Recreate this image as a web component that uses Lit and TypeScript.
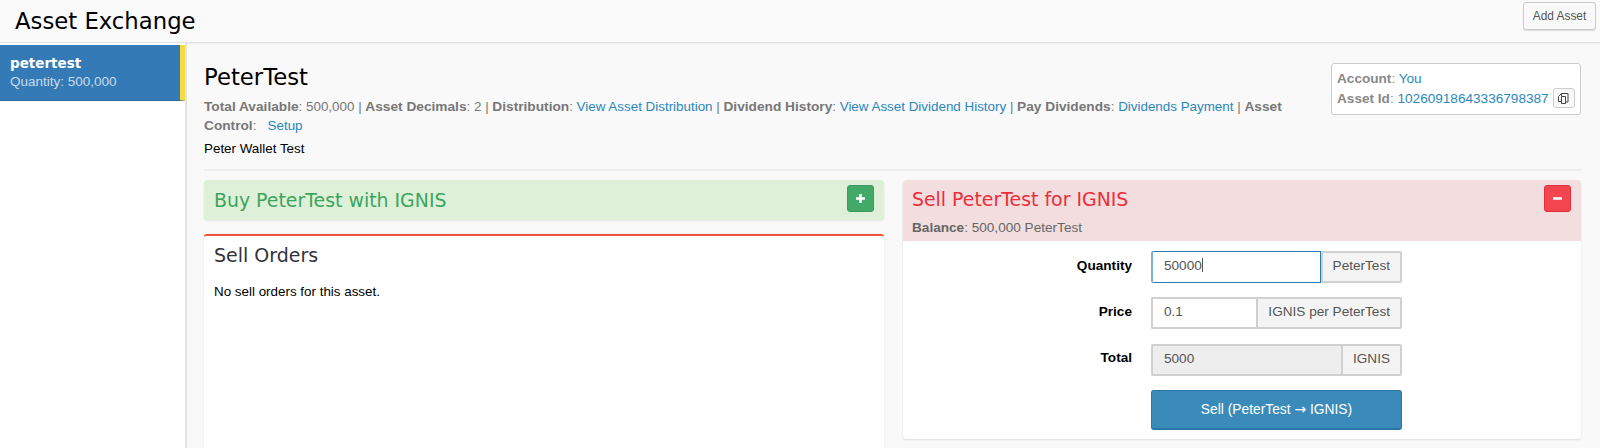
import { LitElement, html, css } from "lit";
import { customElement } from "lit/decorators.js";

@customElement("app-root")
export class AppRoot extends LitElement {
  static styles = css`
    :host { display: block; width: 1600px; height: 448px; overflow: hidden; background: #f9f9f9;
      font-family: "Liberation Sans", Arial, sans-serif; font-size: 13.6px; color: #000; box-sizing: border-box; }
    * { box-sizing: border-box; }
    a { color: #2a87bd; text-decoration: none; }
    .top { height: 43px; border-bottom: 1px solid #e2e2e2; display: flex; justify-content: space-between; align-items: flex-start; padding-left: 15px; background: #fafafa; box-shadow: 0 1px 1px #eee; }
    .top h1 { margin: 0; font: 400 22.75px/42px "DejaVu Sans", sans-serif; color: #000; }
    .add { margin: 2px 4px 0 0; width: 73px; height: 28px; border: 1px solid #ccc; border-radius: 3px; background: #f9f9f9; color: #555; font-size: 11.9px; line-height: 26px; text-align: center; box-shadow: 0 1px 1px #ddd; }
    .main { display: flex; height: 405px; }
    .side { width: 187px; flex: none; background: #fff; border-right: 2px solid #e4e4e4; padding-top: 2px; }
    .item { height: 56px; width: 185px; background: #337ab7; border-right: 5px solid #f5dc3c; border-bottom: 1px solid #2e6da4; padding: 9px 10px; color: #fff; }
    .item b { display: block; font: 700 13.5px/18px "DejaVu Sans", sans-serif; }
    .item span { display: block; font-size: 13.5px; line-height: 19px; color: #c9dcec; }
    .content { flex: 1; min-width: 0; padding: 0 19px 0 17px; }
    .head { display: flex; justify-content: space-between; align-items: flex-start; height: 128px; border-bottom: 2px solid #eee; }
    .info { width: 1100px; padding-top: 19px; }
    .info h2 { margin: 0 0 5px; font: 400 22.75px/30px "DejaVu Sans", sans-serif; color: #000; }
    .meta { font-size: 13.4px; line-height: 19px; color: #777; }
    .meta b { font-weight: 700; font-size: 13.7px; }
    .desc { margin-top: 4px; font-size: 13.4px; line-height: 19px; color: #000; }
    .box { margin-top: 20px; width: 250px; height: 52px; border: 1px solid #ccc; border-radius: 3px; background: #fff; padding: 5px 5px 0; font-size: 13.6px; line-height: 19px; color: #888; }
    .box b { font-weight: 700; }
    .box .r { display: flex; align-items: center; gap: 4px; white-space: nowrap; }
    .copy { flex: none; width: 22px; height: 20px; border: 1px solid #ccc; border-radius: 3px; background: #f9f9f9; display: inline-flex; align-items: center; justify-content: center; }
    .cols { display: grid; grid-template-columns: 680px 678px; gap: 19px; margin-top: 9px; align-items: start; }
    .bar { position: relative; height: 40px; background: #dff0d8; border-radius: 4px; padding: 0 10px; font: 400 18.9px/40px "DejaVu Sans", sans-serif; color: #3aa55d; box-shadow: 0 1px 2px #e4e4e4; }
    .tog { position: absolute; right: 10px; top: 5px; width: 27px; height: 27px; border-radius: 3px; display: flex; align-items: center; justify-content: center; }
    .tog.g { background: #42a968; border: 1px solid #3b9a5e; }
    .tog.r { background: #f2454f; border: 1px solid #e0303a; }
    .orders { margin-top: 14px; height: 220px; background: #fff; border-top: 2px solid #f0533c; border-radius: 3px 3px 0 0; padding: 0 10px; box-shadow: 0 0 2px #e2e2e2; }
    .orders h3 { margin: 0 0 8px; font: 400 19px/38px "DejaVu Sans", sans-serif; color: #33333b; }
    .orders p { margin: 0; font-size: 13.4px; line-height: 20px; }
    .sell { background: #fff; border-radius: 4px; height: 259px; box-shadow: 0 1px 2px #ddd; }
    .sellhead { position: relative; height: 61px; background: #f2dede; border-radius: 4px 4px 0 0; padding: 0 9px; }
    .sellhead .t { font: 400 18.9px/39px "DejaVu Sans", sans-serif; color: #ee2d3a; }
    .sellhead .b { font-size: 13.6px; line-height: 18px; color: #666; }
    .form { display: grid; grid-template-columns: 229px 251px; column-gap: 19px; row-gap: 14.4px; padding-top: 10px; align-items: center; }
    .form label { text-align: right; font-weight: 700; font-size: 13.6px; position: relative; top: -2px; }
    .ig { display: flex; height: 32px; }
    .inp { flex: 1; min-width: 0; border: 2px solid #d0d0d0; border-right: 0; padding: 0 11px; font-size: 13.6px; line-height: 26px; color: #555; background: #fff; border-radius: 2px 0 0 2px; }
    .inp.focus { border: 1px solid #2a7cb5; border-left: 2px solid #7ab3d8; line-height: 28px; }
    .inp.dis { background: #eee; }
    .add2 { flex: none; border: 2px solid #d0d0d0; background: #f4f4f4; padding: 0 10px; font-size: 13.6px; line-height: 26px; color: #555; border-radius: 0 2px 2px 0; }
    .cur { display: inline-block; width: 1px; height: 14px; background: #555; vertical-align: -2px; }
    .btn { grid-column: 2; height: 40px; background: #3b8bba; border: 1px solid #2b76a6; border-bottom-width: 2px; border-radius: 3px; color: #fff; font-size: 13.8px; line-height: 36px; text-align: center; }
    .arrow { font-family: "DejaVu Sans", sans-serif; font-size: 14px; }
  `;

  render() {
    return html`
      <div class="top"><h1>Asset Exchange</h1><div class="add">Add Asset</div></div>
      <div class="main">
        <div class="side">
          <div class="item"><b>petertest</b><span>Quantity: 500,000</span></div>
        </div>
        <div class="content">
          <div class="head">
            <div class="info">
              <h2>PeterTest</h2>
              <div class="meta"><b>Total Available</b>: 500,000 | <b>Asset Decimals</b>: 2 | <b>Distribution</b>: <a>View Asset Distribution</a> | <b>Dividend History</b>: <a>View Asset Dividend History</a> | <b>Pay Dividends</b>: <a>Dividends Payment</a> | <b>Asset Control</b>: &nbsp; <a>Setup</a></div>
              <div class="desc">Peter Wallet Test</div>
            </div>
            <div class="box">
              <div><b>Account</b>: <a>You</a></div>
              <div class="r"><span><b>Asset Id</b>: <a>10260918643336798387</a></span>
                <span class="copy"><svg width="13" height="13" viewBox="0 0 13 13" fill="none" stroke="#444" stroke-width="1"><path d="M4.5 4V1.5H11v8.5H8.5M4.5 1.5 1.5 4.5v5H5"/><path d="M4.5 4.5H8.5V11.5H4.5z"/></svg></span></div>
            </div>
          </div>
          <div class="cols">
            <div>
              <div class="bar">Buy PeterTest with IGNIS
                <div class="tog g"><svg width="11" height="11" viewBox="0 0 11 11"><path d="M5.5 1v9M1 5.5h9" stroke="#fff" stroke-width="2.6"/></svg></div>
              </div>
              <div class="orders"><h3>Sell Orders</h3><p>No sell orders for this asset.</p></div>
            </div>
            <div class="sell">
              <div class="sellhead">
                <div class="t">Sell PeterTest for IGNIS</div>
                <div class="b"><b>Balance</b>: 500,000 PeterTest</div>
                <div class="tog r"><svg width="11" height="11" viewBox="0 0 11 11"><path d="M1 5.5h9" stroke="#fff" stroke-width="2.6"/></svg></div>
              </div>
              <div class="form">
                <label>Quantity</label>
                <div class="ig"><div class="inp focus">50000<span class="cur"></span></div><div class="add2">PeterTest</div></div>
                <label>Price</label>
                <div class="ig"><div class="inp">0.1</div><div class="add2">IGNIS per PeterTest</div></div>
                <label>Total</label>
                <div class="ig"><div class="inp dis">5000</div><div class="add2">IGNIS</div></div>
                <div class="btn">Sell (PeterTest <span class="arrow">→</span> IGNIS)</div>
              </div>
            </div>
          </div>
        </div>
      </div>
    `;
  }
}
